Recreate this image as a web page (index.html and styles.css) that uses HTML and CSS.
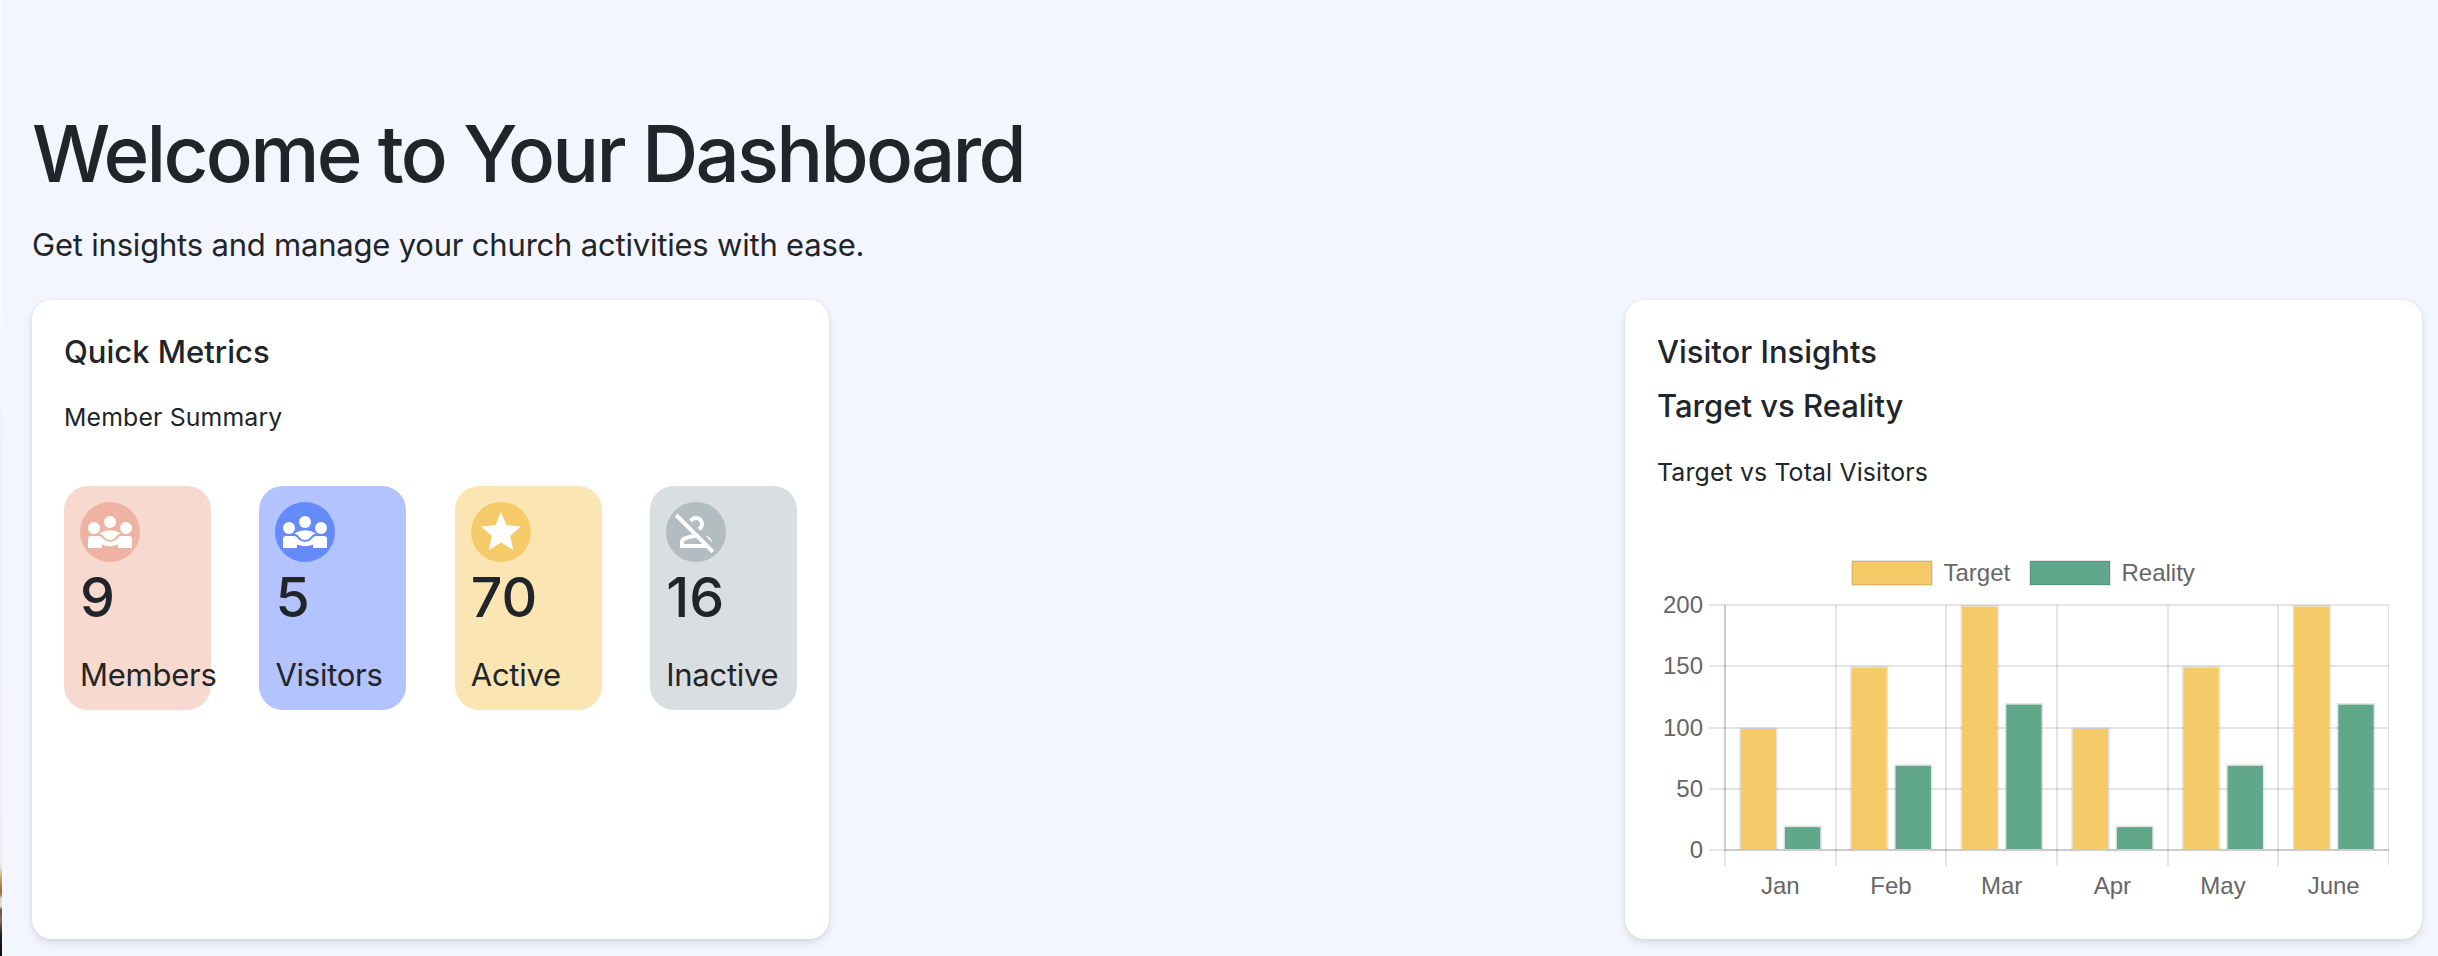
FILE: index.html
```html
<!DOCTYPE html>
<html lang="en">
<head>
<meta charset="utf-8">
<title>Dashboard</title>
<link rel="stylesheet" href="styles.css">
</head>
<body>
<div class="photo-edge"></div>
<main class="dashboard">
  <h1 class="title">Welcome to Your Dashboard</h1>
  <p class="subtitle">Get insights and manage your church activities with ease.</p>
  <div class="cards">
    <section class="card">
      <h2 class="card-title">Quick Metrics</h2>
      <p class="card-note">Member Summary</p>
      <div class="tiles">
        <div class="tile tile-members">
          <div class="icon"><svg viewBox="0 0 24 24"><use href="#people"/></svg></div>
          <div class="value">9</div>
          <div class="label">Members</div>
        </div>
        <div class="tile tile-visitors">
          <div class="icon"><svg viewBox="0 0 24 24"><use href="#people"/></svg></div>
          <div class="value">5</div>
          <div class="label">Visitors</div>
        </div>
        <div class="tile tile-active">
          <div class="icon"><svg viewBox="0 0 24 24"><path d="M12 17.27 18.18 21l-1.64-7.03L22 9.24l-7.19-.61L12 2 9.19 8.63 2 9.24l5.46 4.73L5.82 21z"/></svg></div>
          <div class="value">70</div>
          <div class="label">Active</div>
        </div>
        <div class="tile tile-inactive">
          <div class="icon"><svg viewBox="0 0 24 24"><path d="M20 17.17l-3.37-3.38c.64.22 1.23.48 1.77.76.97.51 1.58 1.52 1.6 2.62zM21.190 21.190l-1.410 1.410L17.170 20H4v-2.780c0-1.120.61-2.150 1.610-2.660 1.290-.66 2.870-1.220 4.670-1.450L1.390 4.220 2.800 2.810zM15.170 18l-3-3H12c-2.370 0-4.290.73-5.480 1.340-.32.16-.52.5-.52.88V18zM12 6c1.100 0 2 .9 2 2 0 .86-.54 1.590-1.300 1.870l1.480 1.480C15.280 10.640 16 9.400 16 8c0-2.210-1.790-4-4-4-1.400 0-2.640.72-3.350 1.820l1.480 1.480C10.410 6.540 11.140 6 12 6z"/></svg></div>
          <div class="value">16</div>
          <div class="label">Inactive</div>
        </div>
      </div>
    </section>
    <section class="card">
      <h2 class="card-title">Visitor Insights</h2>
      <h2 class="card-title">Target vs Reality</h2>
      <p class="card-note">Target vs Total Visitors</p>
      <svg class="chart" id="chart" viewBox="1657 540 733 367"></svg>
    </section>
  </div>
</main>
<svg class="defs" width="0" height="0">
  <symbol id="people" viewBox="0 0 24 24">
    <circle cx="12" cy="7" r="3"/><circle cx="4" cy="10" r="3"/><circle cx="20" cy="10" r="3"/>
    <path d="M1 20v-4.500Q1 14 2.500 14H6.500Q7.500 14 8.300 15C10 17.500 14 17.500 15.700 15Q16.500 14 17.500 14H21.500Q23 14 23 15.500V20H16V18.200Q12 20 8 18.200V20z"/>
    <path d="M6.500 12.700Q12 9.500 17.500 12.700C16.300 13 15.500 13.600 14.900 14.500C13.500 16.500 10.500 16.500 9.100 14.500C8.500 13.600 7.700 13 6.500 12.700z"/>
  </symbol>
</svg>
<script src="chart.js"></script>
</body>
</html>
```
FILE: styles.css
```css
* { box-sizing: border-box; }
body {
  margin: 0;
  height: 956px;
  overflow: hidden;
  background: #f3f6fe;
  color: #212529;
  font-family: Inter, sans-serif;
}
h1, h2, p { margin: 0; }
.photo-edge {
  position: absolute;
  left: 0;
  top: 0;
  width: 2px;
  height: 956px;
  background: linear-gradient(#f7fcff 0, #f7fbfd 300px, #f1f4f6 420px, #eeefec 860px, #e9e5da 868px, #c9ad72 876px, #8f7445 890px, #a98242 895px, #ddd5cc 898px, #e4dfda 906px, #735543 910px, #8a6b57 920px, #25201f 934px, #0c0c0e 956px);
}
.dashboard { padding: 106px 16px 0 32px; }
.title {
  font-size: 78px;
  line-height: 96px;
  font-weight: 500;
  letter-spacing: -2.75px;
  white-space: nowrap;
}
.subtitle {
  margin-top: 19px;
  font-size: 31px;
  line-height: 48px;
  letter-spacing: -0.2px;
  white-space: nowrap;
}
.cards {
  margin-top: 31px;
  display: grid;
  grid-template-columns: 797px 797px;
  column-gap: 796px;
}
.card {
  height: 639px;
  padding: 32px;
  background: #fff;
  border-radius: 20px;
  box-shadow: 0 4px 8px rgba(0, 0, 0, 0.1), 0 0 4px rgba(0, 0, 0, 0.06);
}
.card-title {
  font-size: 31px;
  line-height: 39.4px;
  font-weight: 500;
  margin-bottom: 15px;
}
.card-note {
  margin-top: 27px;
  font-size: 24.8px;
  line-height: 38.4px;
  letter-spacing: 0.16px;
}
.tiles {
  margin-top: 49.200px;
  display: grid;
  grid-template-columns: repeat(4, 1fr);
  column-gap: 48.500px;
}
.tile {
  height: 224px;
  min-width: 0;
  padding: 16px;
  border-radius: 24px;
}
.tile-members { background: #f7d9cf; }
.tile-visitors { background: #b2c3fe; }
.tile-active { background: #fae5b3; }
.tile-inactive { background: #d9dee1; }
.icon {
  width: 60px;
  height: 60px;
  border-radius: 50%;
  display: flex;
  align-items: center;
  justify-content: center;
}
.icon svg { width: 48px; height: 48px; fill: #fff; }
.tile-members .icon { background: #efb3a4; }
.tile-visitors .icon { background: #658bf8; }
.tile-active .icon { background: #f5cb69; }
.tile-inactive .icon { background: #b3bcc1; }
.value {
  margin-top: 1px;
  font-size: 55.500px;
  line-height: 67px;
  font-weight: 500;
}
.label {
  margin-top: 21px;
  font-size: 31px;
  line-height: 48px;
  letter-spacing: -0.25px;
  white-space: nowrap;
}
.chart {
  display: block;
  margin-top: 48.800px;
  width: 733px;
  height: 367px;
  font-family: "Liberation Sans", Arial, sans-serif;
  font-size: 24px;
  fill: #666;
}
.grid { stroke: rgba(0, 0, 0, 0.1); stroke-width: 2; }
.grid-edge { stroke: rgba(0, 0, 0, 0.1); stroke-width: 1; }
.frame { fill: rgba(0, 0, 0, 0.1); }
.bar-target { fill: #f5cb69; }
.bar-reality { fill: #60a78c; }
.tick { text-anchor: end; }
.month { text-anchor: middle; }
.defs { display: none; }
```
FILE: chart.js
```javascript
const months = ["Jan", "Feb", "Mar", "Apr", "May", "June"];
const target = [100, 150, 200, 100, 150, 200];
const reality = [20, 70, 120, 20, 70, 120];
const left = 1725, step = 110.67, base = 850, unit = 1.225;
const gridX = [1725, 1836, 1946, 2057, 2168, 2278];
const gridY = [850, 789, 728, 666, 605];
let out = "";

gridY.forEach((y, i) => {
  out += `<path class="grid" d="M1709 ${y}H2389"/>`;
  out += `<text class="tick" x="1703" y="${y + 8}">${i * 50}</text>`;
});
gridX.forEach((x) => {
  out += `<path class="grid" d="M${x} 605V866"/>`;
});
out += '<path class="grid-edge" d="M2388.5 605V866"/>';

// Each bar is a tinted frame around a solid body.
function bar(x, value, kind) {
  const top = base - value * unit, w = 38.4;
  out += `<path class="frame" d="M${x} ${base}V${top}h${w}V${base}h-1.700V${top + 1.8}h-${w - 3.4}V${base}z"/>`;
  out += `<rect class="bar-${kind}" x="${x + 1.5}" y="${top + 1.6}" width="${w - 3}" height="${base - top - 2.6}"/>`;
}
months.forEach((m, i) => {
  bar(left + 14.2 + i * step, target[i], "target");
  bar(left + 58.4 + i * step, reality[i], "reality");
  out += `<text class="month" x="${left + (i + 0.5) * step}" y="894">${m}</text>`;
});
out += '<path class="grid" d="M1724 850H2389M1725 605V849"/>';

[["Target", 1852, "target"], ["Reality", 2030, "reality"]].forEach(([name, x, kind]) => {
  out += `<rect class="bar-${kind}" x="${x}" y="561" width="80" height="24"/>`;
  out += `<rect class="grid" fill="none" x="${x}" y="561" width="80" height="24"/>`;
  out += `<text x="${x + 91.5}" y="581">${name}</text>`;
});
document.getElementById("chart").innerHTML = out;
```
